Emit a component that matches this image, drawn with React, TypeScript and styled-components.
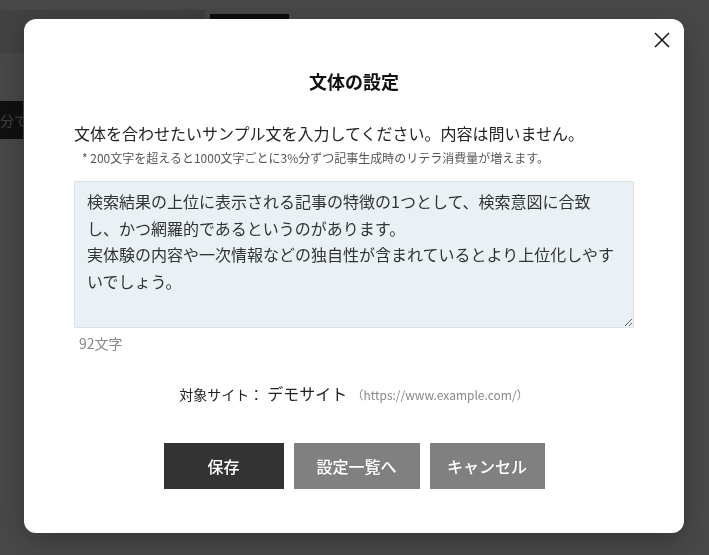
import React, { useState } from "react";
import styled, { createGlobalStyle } from "styled-components";

const GlobalStyle = createGlobalStyle`
  * { box-sizing: border-box; }
  html, body { margin: 0; padding: 0; }
  body {
    font-family: "Noto Sans CJK JP", "Noto Sans", sans-serif;
    color: #333;
    background: #fff;
  }
`;

// ---- page behind the overlay ----
const Page = styled.div`
  width: 709px;
  height: 555px;
  overflow: hidden;
  background: #f2f2f2;
`;

const TopBar = styled.div`
  display: flex;
  align-items: flex-start;
  gap: 5px;
  margin-top: 10px;
`;

const SidePanel = styled.div`
  width: 205px;
  height: 43px;
  background: linear-gradient(90deg, #dcdcdc, #d2d2d2);
`;

const Tab = styled.div`
  width: 79px;
  height: 30px;
  margin-top: 4px;
  background: #2b2b2b;
`;

const PageBadge = styled.div`
  width: 23px;
  height: 38px;
  margin-top: 48px;
  background: #383838;
  color: #d8d8d8;
  font-size: 14px;
  line-height: 38px;
  white-space: nowrap;
  overflow: hidden;
`;

// ---- modal ----
const Overlay = styled.div`
  position: fixed;
  inset: 0;
  background: rgba(0, 0, 0, 0.7);
  display: flex;
  justify-content: flex-start;
  align-items: flex-start;
  padding: 19px 0 0 24px;
`;

const Modal = styled.div`
  position: relative;
  width: 660px;
  height: 514px;
  background: #fff;
  border-radius: 12px;
  box-shadow: 0 8px 30px rgba(0, 0, 0, 0.3);
  padding: 50px 50px 44px;
  display: flex;
  flex-direction: column;
`;

const CloseButton = styled.button`
  position: absolute;
  top: 10px;
  right: 11px;
  width: 22px;
  height: 22px;
  padding: 0;
  border: none;
  background: transparent;
  cursor: pointer;
  display: flex;
  align-items: center;
  justify-content: center;
`;

const Title = styled.h2`
  margin: 0;
  font-size: 18px;
  line-height: 24px;
  font-weight: 700;
  color: #111;
  text-align: center;
`;

const Lead = styled.p`
  margin: 28px 0 0;
  font-size: 16px;
  line-height: 24px;
  color: #222;
`;

const Note = styled.p`
  margin: 4px 0 0 8px;
  font-size: 12px;
  line-height: 18px;
  color: #555;
`;

const SampleArea = styled.textarea`
  display: block;
  width: 560px;
  height: 149px;
  margin-top: 14px;
  padding: 6px 12px;
  border: 1px solid #d6e4e8;
  background: #e9f1f4;
  color: #333;
  font-family: "Noto Sans CJK JP", sans-serif;
  font-size: 16px;
  line-height: 26.7px;
  resize: vertical;
  outline: none;
`;

const Counter = styled.div`
  margin: 5px 0 0 5px;
  font-size: 14px;
  line-height: 20px;
  color: #888;
`;

const SiteRow = styled.div`
  margin-top: 28px;
  display: flex;
  justify-content: center;
  align-items: baseline;
  line-height: 24px;
`;

const SiteLabel = styled.span`
  font-size: 14px;
  color: #222;
`;

const SiteName = styled.span`
  font-size: 16px;
  color: #222;
  margin-left: 4px;
`;

const SiteUrl = styled.span`
  font-size: 12px;
  color: #888;
  margin-left: 4px;
`;

const Actions = styled.div`
  margin-top: 36px;
  display: flex;
  justify-content: center;
  gap: 10px;
`;

const ActionButton = styled.button<{ $primary?: boolean; $w: number }>`
  width: ${(p) => p.$w}px;
  height: 46px;
  border: none;
  border-radius: 0;
  background: ${(p) => (p.$primary ? "#333333" : "#808080")};
  color: #fff;
  font-family: "Noto Sans CJK JP", sans-serif;
  font-size: 16px;
  font-weight: 500;
  cursor: pointer;
`;

const SAMPLE =
  "検索結果の上位に表示される記事の特徴の1つとして、検索意図に合致し、かつ網羅的であるというのがあります。\n実体験の内容や一次情報などの独自性が含まれているとより上位化しやすいでしょう。";

const App = () => {
  const [text, setText] = useState(SAMPLE);

  return (
    <>
      <GlobalStyle />
      <Page>
        <TopBar>
          <SidePanel />
          <Tab />
        </TopBar>
        <PageBadge>分で</PageBadge>
      </Page>

      <Overlay>
        <Modal>
          <CloseButton aria-label="閉じる">
            <svg width="16" height="16" viewBox="0 0 16 16">
              <path d="M1 1L15 15M15 1L1 15" stroke="#111" strokeWidth="1.5" />
            </svg>
          </CloseButton>

          <Title>文体の設定</Title>
          <Lead>文体を合わせたいサンプル文を入力してください。内容は問いません。</Lead>
          <Note>* 200文字を超えると1000文字ごとに3%分ずつ記事生成時のリテラ消費量が増えます。</Note>

          <SampleArea value={text} onChange={(e) => setText(e.target.value)} />
          <Counter>{text.length}文字</Counter>

          <SiteRow>
            <SiteLabel>対象サイト：</SiteLabel>
            <SiteName>デモサイト</SiteName>
            <SiteUrl>（https://www.example.com/）</SiteUrl>
          </SiteRow>

          <Actions>
            <ActionButton $primary $w={120}>保存</ActionButton>
            <ActionButton $w={126}>設定一覧へ</ActionButton>
            <ActionButton $w={115}>キャンセル</ActionButton>
          </Actions>
        </Modal>
      </Overlay>
    </>
  );
};

export default App;
